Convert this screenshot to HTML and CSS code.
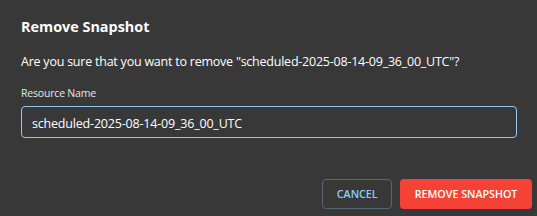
FILE: index.html
```html
<!DOCTYPE html>
<html>
<head>
<meta charset="utf-8">
<link rel="stylesheet" href="styles.css">
</head>
<body>
<div class="dialog">
  <h2 class="title">Remove Snapshot</h2>
  <p class="message">Are you sure that you want to remove "scheduled-2025-08-14-09_36_00_UTC"?</p>
  <label class="label" for="rn">Resource Name</label>
  <input class="field" id="rn" type="text" value="scheduled-2025-08-14-09_36_00_UTC">
  <div class="actions">
    <button class="btn btn-cancel">CANCEL</button>
    <button class="btn btn-danger">REMOVE SNAPSHOT</button>
  </div>
</div>
</body>
</html>
```
FILE: styles.css
```css
html, body {
  margin: 0;
  padding: 0;
  background: #383838;
}
body {
  width: 537px;
  height: 216px;
  overflow: hidden;
  font-family: "Open Sans", "Noto Sans", sans-serif;
  color: #ffffff;
}
.dialog {
  display: flex;
  flex-direction: column;
  padding: 17px 20px 0 21px;
}
.title {
  margin: 0;
  font-size: 14.4px;
  font-weight: 700;
  line-height: 20px;
  color: #ffffff;
}
.message {
  margin: 16px 0 0;
  font-size: 12.5px;
  line-height: 18px;
  letter-spacing: -0.23px;
  color: #ffffff;
}
.label {
  margin-top: 15px;
  font-size: 10.5px;
  line-height: 14px;
  letter-spacing: -0.19px;
  color: #e6e6e6;
}
.field {
  box-sizing: border-box;
  margin: 6px 0 0;
  width: 496px;
  height: 32px;
  padding: 2px 10px 0 10px;
  border: 1px solid #90caf9;
  border-radius: 4px;
  background: transparent;
  font-family: "Open Sans", "Noto Sans", sans-serif;
  font-size: 12.5px;
  line-height: 28px;
  letter-spacing: -0.19px;
  color: #ffffff;
  outline: none;
}
.actions {
  display: flex;
  justify-content: flex-end;
  gap: 8px;
  margin: 41px -15px 0 0;
}
.btn {
  box-sizing: border-box;
  height: 30px;
  border-radius: 4px;
  font-family: "Open Sans", "Noto Sans", sans-serif;
  font-size: 10.7px;
  font-weight: 600;
  cursor: pointer;
}
.btn-cancel {
  padding: 0 13.5px;
  border: 1px solid #55677a;
  background: transparent;
  color: #90caf9;
  line-height: 28px;
}
.btn-danger {
  padding: 0 14.6px;
  border: none;
  background: #f44336;
  color: #ffffff;
  line-height: 30px;
}
```
